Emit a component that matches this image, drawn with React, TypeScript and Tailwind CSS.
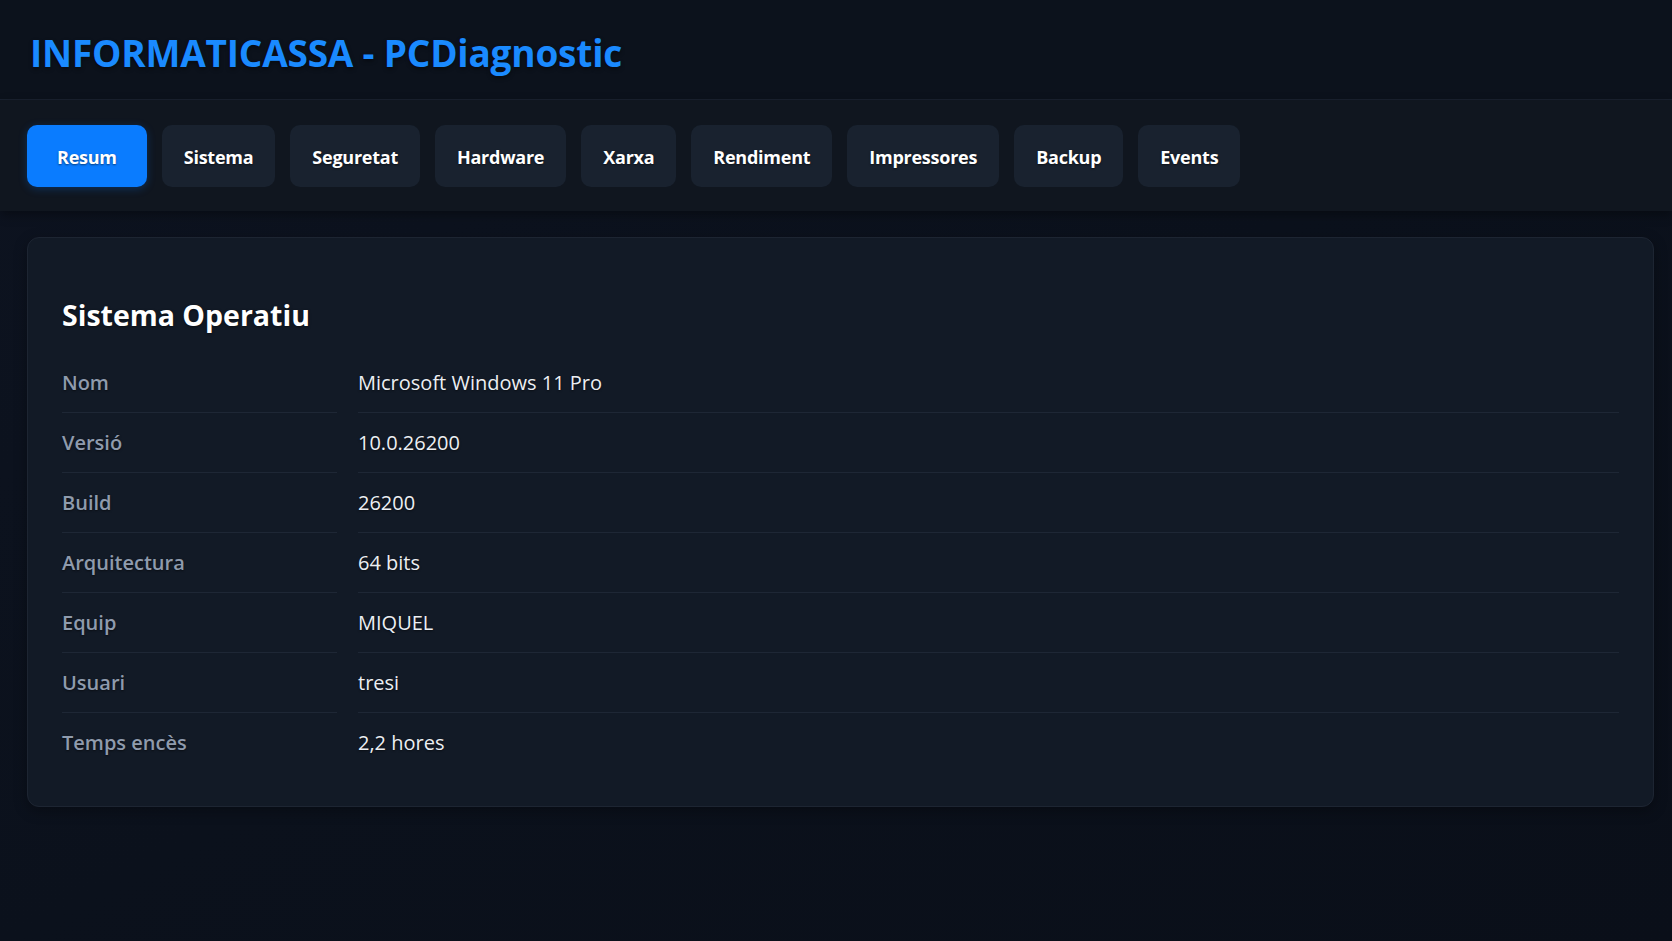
import React, { useState } from 'react';

const TABS = ['Resum', 'Sistema', 'Seguretat', 'Hardware', 'Xarxa', 'Rendiment', 'Impressores', 'Backup', 'Events'];

const OS_INFO: [string, string][] = [
  ['Nom', 'Microsoft Windows 11 Pro'],
  ['Versió', '10.0.26200'],
  ['Build', '26200'],
  ['Arquitectura', '64 bits'],
  ['Equip', 'MIQUEL'],
  ['Usuari', 'tresi'],
  ['Temps encès', '2,2 hores'],
];

const App: React.FC = () => {
  const [active, setActive] = useState('Resum');

  return (
    <div className="min-h-screen bg-gradient-to-br from-[#0d1320] via-[#0b111c] to-[#0a0f19] font-['Open_Sans',_'Liberation_Sans',_sans-serif] text-white">
      {/* Header */}
      <header className="h-[100px] flex items-center px-[30px] pt-[7px] bg-[#0c121c] border-b border-[#1a2230]">
        <h1 className="text-[37px] font-bold tracking-[-0.2px] text-[#1a8aff] [text-shadow:0_2px_4px_rgba(0,0,0,0.45)]">
          INFORMATICASSA - PCDiagnostic
        </h1>
      </header>

      {/* Tabs */}
      <nav className="h-[111px] flex items-center gap-[15px] px-[27px] bg-[#10161f] shadow-[0_4px_10px_rgba(0,0,0,0.35)]">
        {TABS.map(tab => (
          <button
            key={tab}
            onClick={() => setActive(tab)}
            className={`h-[62px] pt-[3px] rounded-[10px] text-[18px] tracking-[-0.25px] font-bold text-white [text-shadow:0_1px_2px_rgba(0,0,0,0.5)] ${
              active === tab
                ? 'px-[30px] bg-[#0a7cff] shadow-[0_2px_8px_rgba(10,124,255,0.25)]'
                : 'px-[22px] bg-[#19222f]'
            }`}
          >
            {tab}
          </button>
        ))}
      </nav>

      {/* Content */}
      <main className="pt-[26px] pl-[27px] pr-[18px]">
        <section className="rounded-[12px] border border-[#1d2532] bg-[#121a26] px-[34px] pt-[58px] pb-[33px] shadow-[0_4px_14px_rgba(0,0,0,0.3)]">
          <h2 className="text-[28.5px] font-bold leading-[38px] mb-[19px] text-white [text-shadow:0_1px_3px_rgba(0,0,0,0.5)]">
            Sistema Operatiu
          </h2>
          <dl className="grid grid-cols-[275px_1fr] gap-x-[21px]">
            {OS_INFO.map(([label, value], idx) => {
              const last = idx === OS_INFO.length - 1;
              return (
                <React.Fragment key={label}>
                  <dt
                    className={`h-[60px] flex items-center text-[20px] font-semibold text-[#8f9bad] [text-shadow:0_1px_2px_rgba(0,0,0,0.5)] ${
                      last ? '' : 'border-b border-[#1e2735]'
                    }`}
                  >
                    {label}
                  </dt>
                  <dd
                    className={`h-[60px] flex items-center text-[20px] text-[#eceff3] [text-shadow:0_1px_2px_rgba(0,0,0,0.5)] ${
                      last ? '' : 'border-b border-[#1e2735]'
                    }`}
                  >
                    {value}
                  </dd>
                </React.Fragment>
              );
            })}
          </dl>
        </section>
      </main>
    </div>
  );
};

export default App;
